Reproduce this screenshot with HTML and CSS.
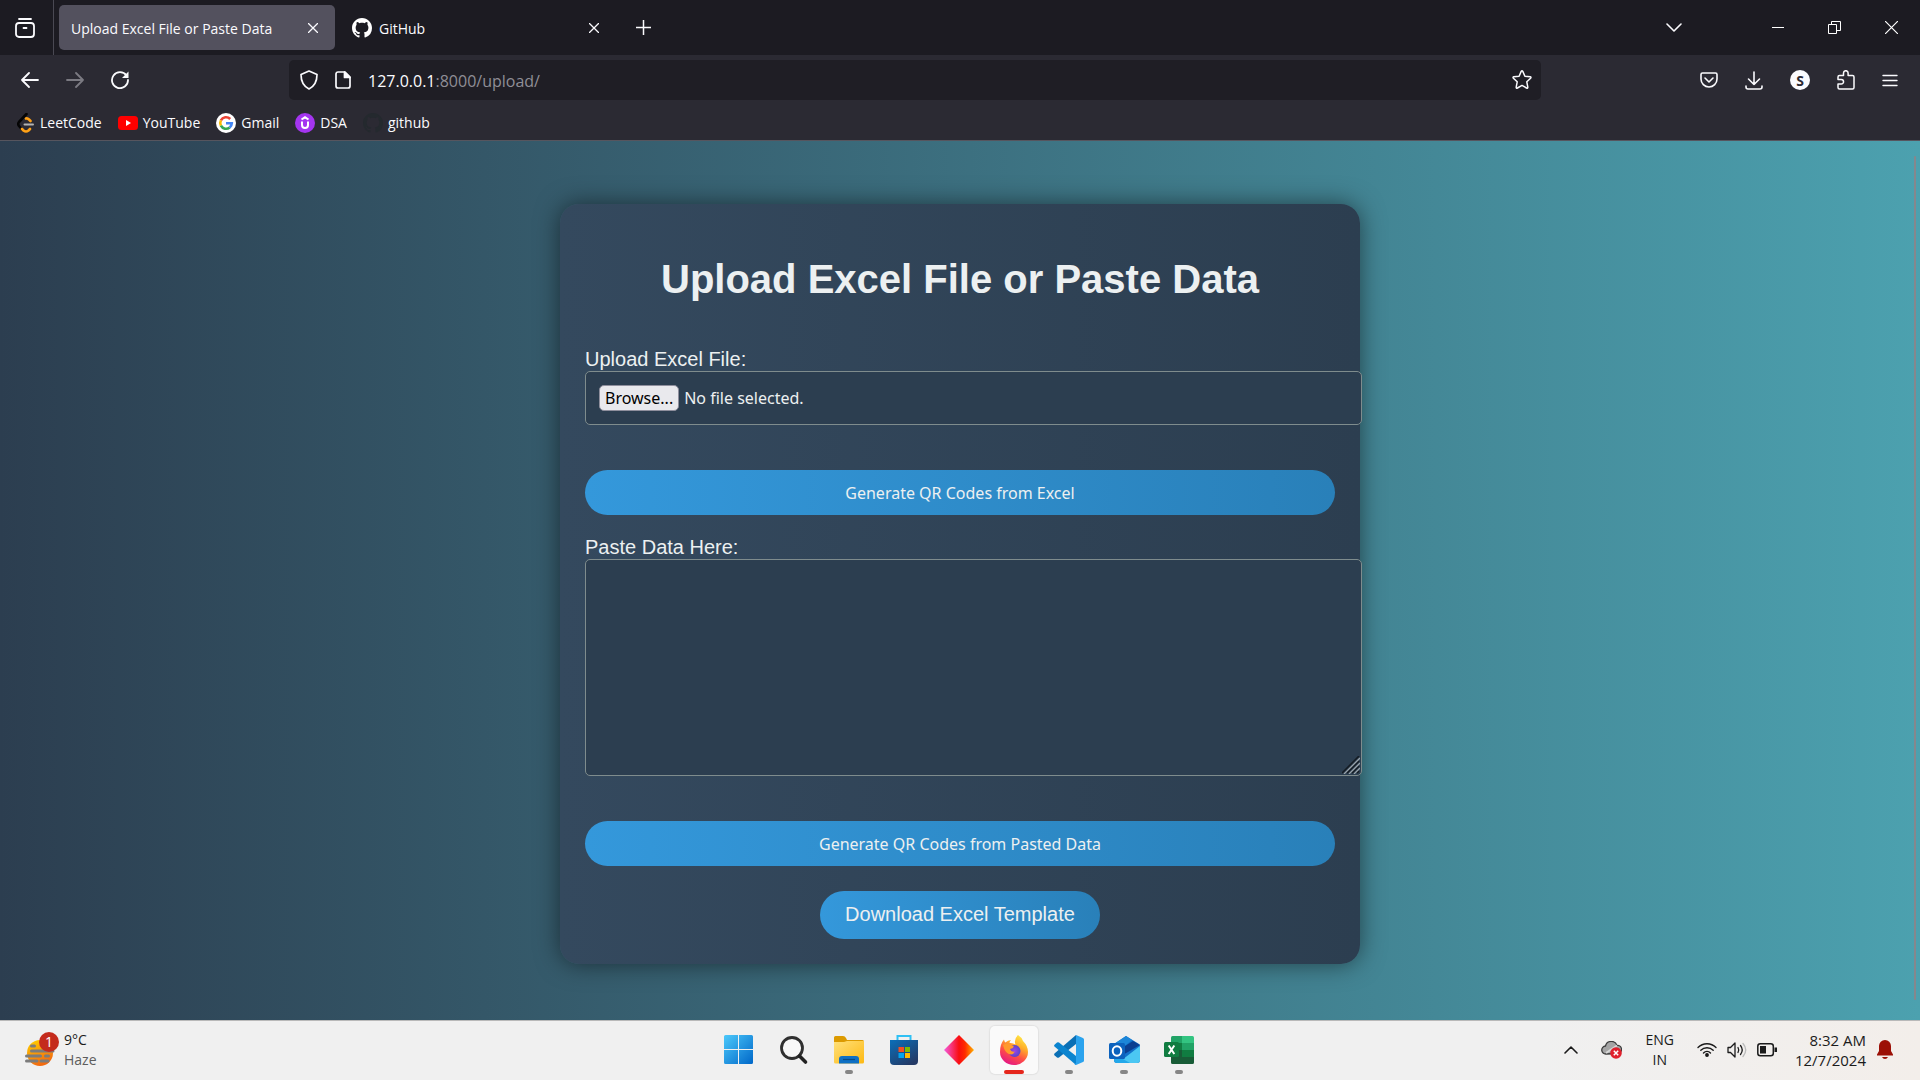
FILE: index.html
```html
<!DOCTYPE html>
<html lang="en">
<head>
<meta charset="utf-8">
<title>Upload Excel File or Paste Data</title>
<link rel="stylesheet" href="styles.css">
</head>
<body>
<header class="browser">
  <div class="tabstrip">
    <button class="icon-btn view-btn" aria-label="Recent browsing"><svg width="20" height="20" viewBox="0 0 20 20" fill="none" stroke="#fbfbfe" stroke-width="1.8" stroke-linecap="round"><rect x="1" y="5" width="18" height="14" rx="3"/><path d="M4 1h12M8.500 10h3"/></svg></button>
    <div class="tab tab-active"><span class="tab-title">Upload Excel File or Paste Data</span><button class="icon-btn" aria-label="Close tab"><svg width="10" height="10" viewBox="0 0 10 10" stroke="#fbfbfe" stroke-width="1.300"><path d="M0 0l10 10M10 0L0 10"/></svg></button></div>
    <div class="tab"><svg width="20" height="20" viewBox="0 0 16 16" fill="#fff"><use href="#octocat"/></svg><span class="tab-title">GitHub</span><button class="icon-btn" aria-label="Close tab"><svg width="10" height="10" viewBox="0 0 10 10" stroke="#fbfbfe" stroke-width="1.300"><path d="M0 0l10 10M10 0L0 10"/></svg></button></div>
    <button class="icon-btn new-tab" aria-label="New tab"><svg width="15" height="15" viewBox="0 0 15 15" stroke="#fbfbfe" stroke-width="1.500"><path d="M7.500 0v15M0 7.500h15"/></svg></button>
    <div class="window-controls">
      <button class="icon-btn list-tabs" aria-label="List all tabs"><svg width="16" height="9" viewBox="0 0 16 9" fill="none" stroke="#fbfbfe" stroke-width="1.600" stroke-linecap="round" stroke-linejoin="round"><path d="M1 1l7 7 7-7"/></svg></button>
      <button class="icon-btn win-btn" aria-label="Minimize"><svg width="12" height="12" viewBox="0 0 12 12" stroke="#fff"><path d="M0 5.500h12"/></svg></button>
      <button class="icon-btn win-btn" aria-label="Restore"><svg width="13" height="13" viewBox="0 0 13 13" fill="none" stroke="#fff"><path d="M.5 3.500h8v9h-8zM3.500 3.500v-3h9v9h-4"/></svg></button>
      <button class="icon-btn win-btn" aria-label="Close"><svg width="13" height="13" viewBox="0 0 13 13" stroke="#fff" stroke-width="1.200"><path d="M0 0l13 13M13 0L0 13"/></svg></button>
    </div>
  </div>
  <div class="toolbar">
    <div class="nav-group">
      <button class="icon-btn" aria-label="Back"><svg width="18" height="16" viewBox="0 0 18 16" fill="none" stroke="#fbfbfe" stroke-width="1.800" stroke-linecap="round" stroke-linejoin="round"><path d="M17 8H1M8 1L1 8l7 7"/></svg></button>
      <button class="icon-btn" aria-label="Forward" disabled><svg width="18" height="16" viewBox="0 0 18 16" fill="none" stroke="#7b7a82" stroke-width="1.800" stroke-linecap="round" stroke-linejoin="round"><path d="M1 8h16M10 1l7 7-7 7"/></svg></button>
      <button class="icon-btn" aria-label="Reload"><svg width="18" height="18" viewBox="0 0 18 18" fill="none" stroke="#fbfbfe" stroke-width="1.800" stroke-linecap="round"><path d="M15.500 4.500A8 8 0 1 0 17 9"/><path d="M17.500.5v6.500H11z" fill="#fbfbfe" stroke="none"/></svg></button>
    </div>
    <div class="urlbar">
      <svg width="18" height="20" viewBox="0 0 18 20" fill="none" stroke="#fbfbfe" stroke-width="1.700" stroke-linejoin="round"><path d="M9 1l8 3.500c0 7-2 11.500-8 14.500-6-3-8-7.500-8-14.500z"/></svg>
      <svg width="16" height="18" viewBox="0 0 16 18" fill="none" stroke="#fbfbfe" stroke-width="1.700" stroke-linejoin="round"><path d="M3 1h7l5 5v9a2 2 0 0 1-2 2H3a2 2 0 0 1-2-2V3a2 2 0 0 1 2-2z"/><path d="M9.500 1v5.500H15z" fill="#fbfbfe"/></svg>
      <span class="url">127.0.0.1<span class="url-dim">:8000/upload/</span></span>
      <button class="icon-btn" aria-label="Bookmark this page"><svg width="20" height="20" viewBox="0 0 20 20" fill="none" stroke="#fbfbfe" stroke-width="1.500" stroke-linejoin="round"><path d="M9.200 1.400Q10 .2 10.800 1.400l2.100 4.800 5.200.6q1.400.3.500 1.400l-3.800 3.600 1 5.300q.1 1.500-1.200.9L10 15.400 5.400 18q-1.300.6-1.200-.9l1-5.300-3.800-3.600q-.9-1.100.5-1.400l5.200-.6z"/></svg></button>
    </div>
    <div class="tools">
      <button class="icon-btn" aria-label="Save to Pocket"><svg width="18" height="16" viewBox="0 0 18 16" fill="none" stroke="#fbfbfe" stroke-width="1.600" stroke-linecap="round" stroke-linejoin="round"><path d="M2.500 1h13A1.500 1.500 0 0 1 17 2.500V7A8 8 0 0 1 1 7V2.500A1.500 1.500 0 0 1 2.500 1zM5 6l4 4 4-4"/></svg></button>
      <button class="icon-btn" aria-label="Downloads"><svg width="18" height="19" viewBox="0 0 18 19" fill="none" stroke="#fbfbfe" stroke-width="1.600" stroke-linecap="round" stroke-linejoin="round"><path d="M9 1v12.500M3.500 8L9 13.500 14.500 8M1 15v1a2 2 0 0 0 2 2h12a2 2 0 0 0 2-2v-1"/></svg></button>
      <button class="icon-btn account" aria-label="Account">S</button>
      <button class="icon-btn" aria-label="Extensions"><svg width="18" height="20" viewBox="0 0 18 20" fill="none" stroke="#fbfbfe" stroke-width="1.500" stroke-linejoin="round"><path d="M2.500 5.500H6.500V3a2.300 2.300 0 0 1 4.600 0V5.500H15.500A1.500 1.500 0 0 1 17 7v10.500a1.500 1.500 0 0 1-1.500 1.500h-13A1.500 1.500 0 0 1 1 17.500V14h3.300a2 2 0 0 0 0-4.500H1V7a1.500 1.500 0 0 1 1.500-1.500z"/></svg></button>
      <button class="icon-btn" aria-label="Open menu"><svg width="16" height="13" viewBox="0 0 16 13" stroke="#fbfbfe" stroke-width="1.400" stroke-linecap="round"><path d="M1 1.500h14M1 6.500h14M1 11.500h14"/></svg></button>
    </div>
  </div>
  <nav class="bookmarks">
    <a href="#"><svg width="18" height="20" viewBox="0 0 18 20" fill="none" stroke-width="2.600" stroke-linecap="round" stroke-linejoin="round"><path d="M9.500 1L2 9q-1.500 2 0 4l3 3.500" stroke="#050505"/><path d="M9 5.500q1.500-.5 3 1l1.500 1.500M5 16l1.500 1.500q2.500 2 5 0l1.500-1.500" stroke="#ffa116"/><path d="M7.500 11.500H16" stroke="#b3b3b3" stroke-width="2"/></svg>LeetCode</a>
    <a href="#"><svg width="20" height="14" viewBox="0 0 20 14"><rect width="20" height="14" rx="3.500" fill="#f00"/><path d="M8 4l5 3-5 3z" fill="#fff"/></svg>YouTube</a>
    <a href="#"><svg width="20" height="20" viewBox="0 0 20 20" fill="none" stroke-width="2.600"><circle cx="10" cy="10" r="10" fill="#fff"/><path d="M14.200 6A5.800 5.800 0 0 0 4.900 7.300" stroke="#ea4335"/><path d="M4.900 7.300a5.800 5.800 0 0 0 0 5.400" stroke="#fbbc05"/><path d="M4.900 12.700a5.800 5.800 0 0 0 8.800 1.800" stroke="#34a853"/><path d="M13.700 14.500a5.800 5.800 0 0 0 2.100-4.200H10" stroke="#4285f4"/></svg>Gmail</a>
    <a href="#"><svg width="20" height="20" viewBox="0 0 20 20" fill="none" stroke="#fff" stroke-width="2"><circle cx="10" cy="10" r="10" fill="#a435f0" stroke="none"/><path d="M6.500 6.500L10 4.300l3.500 2.200M7 8.500V12a3 3 0 0 0 6 0V8.500"/></svg>DSA</a>
    <a href="#"><svg width="20" height="20" viewBox="0 0 16 16" fill="#24292e"><path id="octocat" d="M8 0C3.580 0 0 3.580 0 8c0 3.540 2.290 6.530 5.470 7.590.4.070.55-.17.55-.38 0-.19-.01-.82-.01-1.490-2.010.37-2.530-.49-2.690-.94-.09-.23-.48-.94-.82-1.130-.28-.15-.68-.52-.01-.53.63-.01 1.080.58 1.230.82.72 1.210 1.870.87 2.330.66.07-.52.28-.87.51-1.070-1.780-.2-3.640-.89-3.640-3.950 0-.87.31-1.590.82-2.150-.08-.2-.36-1.020.08-2.120 0 0 .67-.21 2.200.82.64-.18 1.320-.27 2-.27s1.360.09 2 .27c1.530-1.040 2.200-.82 2.200-.82.44 1.100.16 1.920.08 2.120.51.56.82 1.270.82 2.150 0 3.070-1.870 3.750-3.650 3.950.29.25.54.73.54 1.480 0 1.070-.01 1.930-.01 2.200 0 .21.15.46.55.38A8.010 8.010 0 0 0 16 8c0-4.420-3.580-8-8-8z"/></svg>github</a>
  </nav>
</header>

<main class="page">
  <section class="card">
    <h1>Upload Excel File or Paste Data</h1>
    <form class="upload-form">
      <label for="excel-file">Upload Excel File:</label>
      <div class="field file-field">
        <input class="file-input" id="excel-file" type="file" tabindex="-1">
        <button class="browse" type="button">Browse...</button>
        <span class="file-name">No file selected.</span>
      </div>
      <button class="primary" type="submit">Generate QR Codes from Excel</button>
    </form>
    <form class="upload-form">
      <label for="paste-data">Paste Data Here:</label>
      <div class="paste-wrap">
        <textarea class="field" id="paste-data"></textarea>
        <svg class="grip" width="18" height="18" viewBox="0 0 18 18" fill="none"><path d="M0 17L17 0M5 17L17 5M10 17l7-7M15 17l2-2" stroke="#141b23" stroke-width="1.500"/><path d="M2 18L18 2M7 18L18 7M12 18l6-6" stroke="#98a2a9" stroke-width="1.300"/></svg>
      </div>
      <button class="primary" type="submit">Generate QR Codes from Pasted Data</button>
    </form>
    <a class="download" href="#">Download Excel Template</a>
  </section>
  <div class="scroll-thumb"></div>
</main>

<footer class="taskbar">
  <div class="weather">
    <svg width="34" height="36" viewBox="0 0 34 36"><defs><linearGradient id="sun" x2=".4" y2="1"><stop stop-color="#ffd400"/><stop offset="1" stop-color="#f26a0f"/></linearGradient></defs><circle cx="15" cy="21" r="13" fill="url(#sun)"/><path d="M6.500 14h3M6.500 19H28M1.500 24h14M20.500 24h3M1.500 29H12M16 29h7" stroke="#7c7c7c" stroke-width="3" stroke-linecap="round"/><circle cx="24" cy="10" r="10" fill="#c42b1c"/><text x="24" y="15" text-anchor="middle" class="badge-text">1</text></svg>
    <div class="stack"><span>9°C</span><span class="muted">Haze</span></div>
  </div>
  <div class="apps">
    <button class="app" aria-label="Start"><svg width="30" height="30" viewBox="0 0 30 30"><defs><linearGradient id="win" x2="1" y2="1"><stop stop-color="#4cc9fb"/><stop offset="1" stop-color="#0067c8"/></linearGradient></defs><path d="M1.500 0H14v14H0V1.500A1.500 1.500 0 0 1 1.500 0zM15 0h12.500A1.500 1.500 0 0 1 29 1.500V14H15zM0 15h14v14H1.500A1.500 1.500 0 0 1 0 27.500zM15 15h14v12.500a1.500 1.500 0 0 1-1.500 1.500H15z" fill="url(#win)"/></svg></button>
    <button class="app" aria-label="Search"><svg width="30" height="30" viewBox="0 0 30 30" fill="none"><circle cx="13" cy="13" r="10.500" fill="#f8f8f8" stroke="#303030" stroke-width="2.800"/><path d="M20.500 21l6 6" stroke="#222" stroke-width="3.600" stroke-linecap="round"/></svg></button>
    <button class="app running" aria-label="File Explorer"><svg width="30" height="28" viewBox="0 0 30 28"><defs><linearGradient id="folder" x2="1" y2="1"><stop stop-color="#ffe07a"/><stop offset="1" stop-color="#fdb913"/></linearGradient></defs><path d="M0 1.500A1.500 1.500 0 0 1 1.500 0H9q2 0 3 2l1 2h15.500A1.500 1.500 0 0 1 30 5.500V12H0z" fill="#dc9a00"/><path d="M0 6h10l3-1h17v21a1.500 1.500 0 0 1-1.500 1.500h-27A1.500 1.500 0 0 1 0 26z" fill="url(#folder)"/><path d="M5 27.500V23a3 3 0 0 1 3-3h14a3 3 0 0 1 3 3v4.500z" fill="#0f70c4"/><path d="M9 23.500h12" stroke="#074a86" stroke-width="1.200"/></svg></button>
    <button class="app" aria-label="Microsoft Store"><svg width="30" height="30" viewBox="0 0 30 30"><defs><linearGradient id="store" x2=".7" y2="1"><stop stop-color="#0a6fba"/><stop offset="1" stop-color="#243a66"/></linearGradient></defs><path d="M8.500 7V1h13v6" fill="none" stroke="#2fc0f4" stroke-width="2"/><path d="M1 5h28v21a4 4 0 0 1-4 4H5a4 4 0 0 1-4-4z" fill="url(#store)"/><path d="M9.500 12H15v5H9.500z" fill="#f25022"/><path d="M16 12h5v5h-5z" fill="#7fba00"/><path d="M9.500 18H15v5H9.500z" fill="#00a4ef"/><path d="M16 18h5v5h-5z" fill="#ffb900"/></svg></button>
    <button class="app" aria-label="Copilot"><svg width="30" height="30" viewBox="0 0 30 30"><defs><linearGradient id="dia"><stop stop-color="#f45be0"/><stop offset=".5" stop-color="#f90e10"/><stop offset=".7" stop-color="#ff2b00"/><stop offset="1" stop-color="#ffb400"/></linearGradient></defs><path d="M15 0l15 15-15 15L0 15z" fill="url(#dia)"/></svg></button>
    <button class="app running focused" aria-label="Firefox"><svg width="30" height="30" viewBox="0 0 30 30"><defs><linearGradient id="fox" x1=".8" y1="0" x2=".3" y2="1"><stop stop-color="#fff04a"/><stop offset=".35" stop-color="#ffac28"/><stop offset=".65" stop-color="#ff4f45"/><stop offset="1" stop-color="#e31587"/></linearGradient><radialGradient id="globe"><stop stop-color="#a044e8"/><stop offset="1" stop-color="#5946c9"/></radialGradient></defs><path d="M19 0q4 2.500 5 6 5 5 5 11A14 13 0 0 1 1 17Q1 9 5 4.500q.3 2 1.300 3Q9 5 12 5q-1.500 1.500-1.500 3 3-.5 6 1.500-2-5 2.500-9.500z" fill="url(#fox)"/><circle cx="15.500" cy="16" r="6" fill="url(#globe)"/><path d="M4 10q4-3 8 0l3 1.500q-1 2-4 2.500 1 3.500 5 2.500-2 4-6 2.500-4-1-6-9z" fill="#ff9a2b"/></svg></button>
    <button class="app running" aria-label="Visual Studio Code"><svg width="30" height="30" viewBox="0 0 30 30"><path d="M22 0v9L5 22.500q-1 .7-2 0l-2.500-2.200q-.8-1 0-1.900z" fill="#0a6fb5"/><path d="M22 30v-9L5 7.500q-1-.7-2 0L.5 9.700q-.8 1 0 1.900z" fill="#0b84cf"/><path d="M22 0l7 3q1 .6 1 1.600v20.800q0 1-1 1.600l-7 3q-.9.100-1.500-.5L22 28z" fill="#2ba3ee"/></svg></button>
    <button class="app running" aria-label="Outlook"><svg width="31" height="28" viewBox="0 0 31 28"><path d="M17 0l13 8q1 .7 1 2v14q0 3-3 3H8q-3 0-3-3V8z" fill="#1170c9"/><path d="M5 8l12-8 6 4-12 10z" fill="#1c86d8"/><path d="M31 9L12 20 8 15 24 5z" fill="#0b3f91"/><path d="M31 10v14q0 3-3 3H9z" fill="#4bc7f3"/><path d="M5 18l16 9H8q-3 0-3-3z" fill="#23a8ea"/><rect y="7" width="16" height="16" rx="1.500" fill="#0c62bd"/><ellipse cx="8" cy="15" rx="4.300" ry="4.700" fill="none" stroke="#fff" stroke-width="2"/></svg></button>
    <button class="app running" aria-label="Excel"><svg width="30" height="28" viewBox="0 0 30 28"><path d="M8.500 0H18v7H7V1.500A1.500 1.500 0 0 1 8.500 0z" fill="#21a366"/><path d="M18 0h10.500A1.500 1.500 0 0 1 30 1.500V7H18z" fill="#33c481"/><path d="M7 7h11v7H7z" fill="#107c41"/><path d="M18 7h12v7H18z" fill="#21a366"/><path d="M18 14h12v7H18z" fill="#107c41"/><path d="M7 14h11v7h12v5.500a1.500 1.500 0 0 1-1.500 1.500h-20A1.500 1.500 0 0 1 7 26.500z" fill="#185c37"/><rect y="6" width="15" height="15" rx="1.500" fill="#107c41"/><path d="M4.700 9.500l5.600 8.500M10.300 9.500L4.700 18" stroke="#fff" stroke-width="2"/></svg></button>
  </div>
  <div class="tray">
    <svg width="14" height="8" viewBox="0 0 14 8" fill="none" stroke="#1b1b1b" stroke-width="1.600" stroke-linecap="round" stroke-linejoin="round"><path d="M1 7l6-6 6 6"/></svg>
    <svg class="cloud" width="21" height="18" viewBox="0 0 21 18"><path d="M5 13a4 4 0 0 1-.5-8A6 6 0 0 1 16 4.500a4 4 0 0 1 1 8z" fill="#a5a5a5" stroke="#3c3c3c" stroke-width="1.300"/><path d="M5 12L16 4.500" stroke="#d8d8d8" stroke-width="2"/><circle cx="15" cy="12" r="5.800" fill="#e0202c"/><path d="M12.800 9.800l4.400 4.400M17.200 9.800l-4.400 4.400" stroke="#fff" stroke-width="1.500"/></svg>
    <div class="stack lang"><span>ENG</span><span>IN</span></div>
    <div class="status">
      <svg width="20" height="15" viewBox="0 0 20 15" fill="none" stroke="#1b1b1b" stroke-width="1.400" stroke-linecap="round"><path d="M1 5.500a12.700 12.700 0 0 1 18 0M3.800 8.300a8.800 8.800 0 0 1 12.400 0M6.500 11a5 5 0 0 1 7 0"/><circle cx="10" cy="13" r="1.200" fill="#1b1b1b"/></svg>
      <svg width="20" height="16" viewBox="0 0 20 16" fill="none" stroke="#1b1b1b" stroke-width="1.300" stroke-linecap="round" stroke-linejoin="round"><path d="M1 5.500h2.500L8 1v14l-4.500-4.500H1zM11 5.500q1.500 2.500 0 5M13.500 3.500q3.500 4.500 0 9"/><path d="M16 1.500q5.500 6.500 0 13" stroke="#bbb"/></svg>
      <svg width="20" height="14" viewBox="0 0 20 14"><rect x=".8" y=".8" width="15.500" height="12" rx="2.500" fill="none" stroke="#1b1b1b" stroke-width="1.500"/><path d="M3 3h6v7.500H3zM17.500 4.500H20v4.500h-2.500z" fill="#1b1b1b"/></svg>
    </div>
    <div class="stack clock"><span>8:32 AM</span><span>12/7/2024</span></div>
    <svg width="16" height="19" viewBox="0 0 16 19" fill="#9c1006"><path d="M8 0a6 6 0 0 1 6 6v5l2 3.500v1H0v-1L2 11V6a6 6 0 0 1 6-6zM5 17h6q-1 2-3 2t-3-2z"/></svg>
  </div>
</footer>
<script src="script.js"></script>
</body>
</html>
```
FILE: styles.css
```css
* { box-sizing: border-box; }

body {
  margin: 0;
  min-height: 100vh;
  display: flex;
  flex-direction: column;
  font-family: "Liberation Sans", Arial, sans-serif;
  font-size: 20px;
  color: #ecf0f1;
}

button { font: inherit; color: inherit; border: 0; cursor: pointer; }
svg { display: block; flex: none; }

/* Browser chrome */
.browser {
  background: #2b2a33;
  color: #fbfbfe;
  font-family: "Open Sans", "Noto Sans", sans-serif;
  font-size: 14px;
  border-bottom: 1px solid #56555e;
}

.icon-btn {
  display: flex;
  align-items: center;
  justify-content: center;
  padding: 0;
  background: none;
}

.tabstrip { display: flex; align-items: center; height: 55px; background: #1c1b22; }
.view-btn { width: 54px; height: 55px; padding-right: 4px; border-right: 1px solid #4a4953; margin-right: 5px; }

.tab {
  display: flex;
  align-items: center;
  gap: 7px;
  width: 276px;
  height: 45px;
  padding: 0 17px 0 12px;
  border-radius: 5px;
}
.tab + .tab { margin-left: 5px; }
.tab-active { background: #53515e; }
.tab-title { flex: 1; padding-top: 2px; white-space: nowrap; }
.new-tab { margin-left: 20px; }

.window-controls { display: flex; align-items: center; margin-left: auto; }
.list-tabs { margin-right: 67px; }
.win-btn { width: 57px; height: 55px; }

.toolbar { display: flex; align-items: center; height: 50px; padding: 0 22px 0 21px; }
.nav-group { display: flex; align-items: center; gap: 27px; width: 268px; }

.urlbar {
  display: flex;
  align-items: center;
  gap: 17px;
  flex: 1;
  height: 40px;
  padding: 0 9px 0 11px;
  background: #1f1e25;
  border-radius: 5px;
}
.url { flex: 1; padding-top: 2px; font-size: 16px; }
.url-dim { color: #8f8e96; }

.tools { display: flex; align-items: center; gap: 27px; margin-left: 159px; }
.account {
  width: 20px;
  height: 20px;
  border-radius: 50%;
  background: #fbfbfe;
  color: #2b2a33;
  font-size: 14px;
  font-weight: 700;
}

.bookmarks { display: flex; align-items: center; gap: 16px; height: 35px; padding: 0 17px; }
.bookmarks a {
  display: flex;
  align-items: center;
  gap: 5px;
  color: inherit;
  text-decoration: none;
}

/* Page */
.page {
  position: relative;
  flex: 1;
  display: flex;
  align-items: flex-start;
  justify-content: center;
  padding: 63px 24px 24px;
  background: linear-gradient(to right, #2c3e50, #4ca1af);
}

.scroll-thumb {
  position: absolute;
  top: 15px;
  right: 4px;
  bottom: 20px;
  width: 2px;
  border-radius: 1px;
  background: #85878d;
}

.card {
  width: 100%;
  max-width: 800px;
  padding: 25px;
  text-align: center;
  border-radius: 19px;
  background: linear-gradient(to right, #34495e, #2c3e50);
  box-shadow: 0 0 25px rgba(0, 0, 0, 0.5);
}
.card h1 { margin: 27px 0 46px; font-size: 40px; line-height: 46px; }

.upload-form { display: flex; flex-direction: column; text-align: left; }
.upload-form label { line-height: 23px; }

.field {
  display: block;
  width: calc(100% + 27px);
  padding: 13px;
  border: 1px solid #7f8c8d;
  border-radius: 5px;
  background: #2c3e50;
  color: #ecf0f1;
}
.file-field {
  position: relative;
  display: flex;
  align-items: center;
  gap: 5px;
  height: 54px;
  font-family: "Noto Sans", sans-serif;
  font-size: 16px;
}
.file-input { position: absolute; width: 1px; height: 1px; opacity: 0; }
.browse {
  height: 26px;
  padding: 0 5px;
  border: 1px solid #8f8f9d;
  border-radius: 5px;
  background: #e9e9ed;
  color: #000;
  line-height: 24px;
}

.paste-wrap { position: relative; width: calc(100% + 27px); }
.paste-wrap .field { width: 100%; height: 217px; resize: none; font-size: 16px; }
.grip { position: absolute; right: 2px; bottom: 2px; pointer-events: none; }

.primary {
  height: 45px;
  margin: 45px 0 25px;
  border-radius: 23px;
  background: linear-gradient(to right, #3498db, #2980b9);
  color: #ecf0f1;
  font-family: "Noto Sans", sans-serif;
  font-size: 16px;
}
.upload-form:first-of-type .primary { margin-bottom: 21px; }

.download {
  display: block;
  width: fit-content;
  margin: 0 auto;
  padding: 12px 25px 13px;
  border-radius: 24px;
  background: linear-gradient(to right, #3498db, #2980b9);
  color: #ecf0f1;
  line-height: 23px;
  text-decoration: none;
}

/* Taskbar */
.taskbar {
  display: grid;
  grid-template-columns: 1fr auto 1fr;
  align-items: center;
  height: 60px;
  padding: 0 27px 2px 25px;
  border-top: 1px solid #b9b9b9;
  background: linear-gradient(to right, #f0f0f0 80%, #f3eeea);
  color: #1b1b1b;
  font-family: "Open Sans", "Noto Sans", sans-serif;
  font-size: 14px;
}
.weather { display: flex; align-items: center; gap: 5px; }
.badge-text { fill: #fff; font-size: 14px; }
.stack { display: flex; flex-direction: column; line-height: 20px; }
.muted { color: #5d5d5d; }

.apps { display: flex; gap: 7px; }
.app {
  position: relative;
  display: flex;
  align-items: center;
  justify-content: center;
  width: 48px;
  height: 48px;
  padding: 0;
  border-radius: 5px;
  background: none;
}
.focused { background: #fafafa; box-shadow: 0 0 1px 1px #e2e2e2; }
.running::after {
  content: "";
  position: absolute;
  bottom: 0;
  left: 20px;
  width: 8px;
  height: 4px;
  border-radius: 2px;
  background: #868686;
}
.focused::after { left: 14px; width: 20px; background: #e5261c; }

.tray { display: flex; align-items: center; justify-content: flex-end; }
.cloud { margin-left: 23px; }
.lang { margin: 0 23px; text-align: center; }
.status { display: flex; align-items: center; gap: 10px; }
.clock { margin: 0 11px 0 18px; font-size: 15px; text-align: right; }
```
FILE: script.js
```js
const input = document.querySelector('.file-input');
document.querySelector('.browse').addEventListener('click', () => input.click());
input.addEventListener('change', () => {
  document.querySelector('.file-name').textContent =
    input.files.length ? input.files[0].name : 'No file selected.';
});
```
